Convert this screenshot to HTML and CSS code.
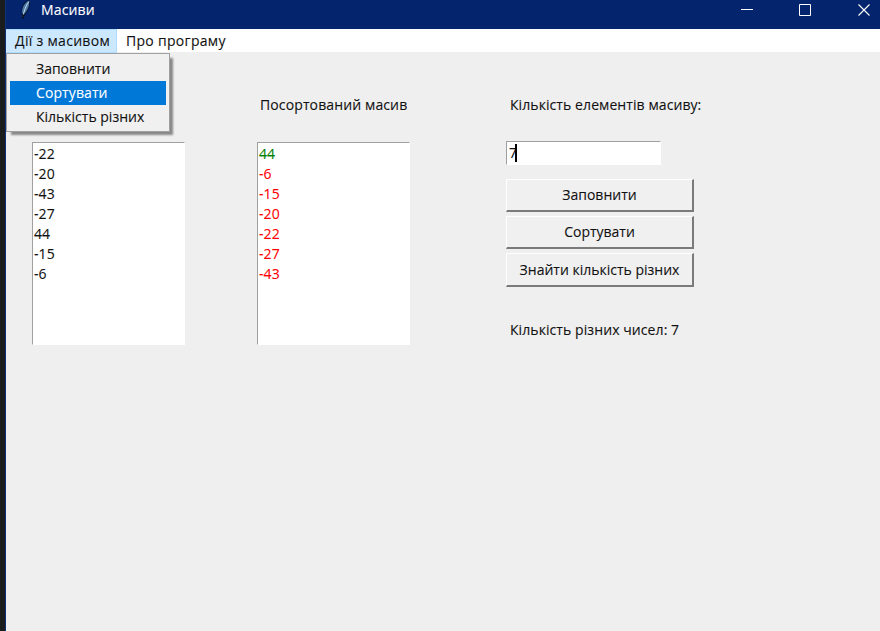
FILE: index.html
```html
<!DOCTYPE html>
<html lang="uk">
<head>
<meta charset="utf-8">
<title>Масиви</title>
<link rel="stylesheet" href="styles.css">
</head>
<body>
<div class="window">
  <header class="titlebar">
    <svg class="feather" width="12" height="20" viewBox="0 0 12 20">
      <path d="M3 18.500C1 14 1 7 4 3.500 6 1 8.500 0 9.500 1c1.200 2-.2 8-2.600 11.500C5.500 14.500 4 15.500 3 18.500z" fill="#07142c"/>
      <path d="M2.200 13.500C1.700 8.500 3.500 3.500 8.800 .8 9.800 5 8 10 4.500 13.500z" fill="#527da9"/>
      <path d="M3 17C3.800 11.500 5.500 6 9 1.500" fill="none" stroke="#b6d9ec" stroke-width="1"/>
      <path d="M2.600 18.500l.9-4" stroke="#080d18" stroke-width="1.500"/>
    </svg>
    <h1 class="title">Масиви</h1>
    <svg class="controls" width="134" height="20" viewBox="0 0 134 20" fill="none" stroke="#fff">
      <path d="M1 9.500h12M59.500 4.500h11v11h-11z"/>
      <path d="M118.500 4.500l11 11M129.500 4.500l-11 11" stroke-width="1.100"/>
    </svg>
  </header>
  <nav class="menubar">
    <div class="menu-item open"><span>Дії з масивом</span>
      <div class="dropdown">
        <div class="option">Заповнити</div>
        <div class="option selected">Сортувати</div>
        <div class="option">Кількість різних</div>
      </div>
    </div>
    <div class="menu-item about">Про програму</div>
  </nav>
  <main class="content">
    <section class="array">
      <div class="label"></div>
      <div class="list"><div>-22</div><div>-20</div><div>-43</div><div>-27</div><div>44</div><div>-15</div><div>-6</div></div>
    </section>
    <section class="array">
      <div class="label sorted-label">Посортований масив</div>
      <div class="list sorted"><div class="max">44</div><div>-6</div><div>-15</div><div>-20</div><div>-22</div><div>-27</div><div>-43</div></div>
    </section>
    <section class="panel">
      <div class="label amount-label">Кількість елементів масиву:</div>
      <div class="entry">7<span class="caret"></span></div>
      <div class="buttons">
        <button>Заповнити</button>
        <button>Сортувати</button>
        <button class="find">Знайти кількість різних</button>
      </div>
      <div class="result">Кількість різних чисел: 7</div>
    </section>
  </main>
</div>
</body>
</html>
```
FILE: styles.css
```css
* { box-sizing: border-box; }
body {
  margin: 0;
  height: 631px;
  padding-left: 5px;
  overflow: hidden;
  background: #1b1c1e;
  color: #111;
  font: 14px/20px "Open Sans", "Noto Sans", sans-serif;
  -webkit-text-stroke: 0.1px currentColor;
  white-space: nowrap;
}
.window { height: 631px; border-left: 1px solid #11307a; background: #efefef; }
.titlebar { display: flex; align-items: flex-start; height: 29px; padding-left: 14px; background: #04246e; color: #fff; }
.title { margin: 0 0 0 9px; font: 14px/20px "Open Sans", sans-serif; letter-spacing: 0.15px; }
.controls { margin-left: auto; margin-right: 6px; }
.menubar { display: flex; height: 23px; background: #fff; line-height: 24px; }
.menu-item { position: relative; padding-left: 9px; letter-spacing: 0.3px; }
.open { width: 111px; height: 24px; border: 1px solid #b0dcff; border-left: 0; background: #cce8ff; line-height: 22px; }
.dropdown {
  position: absolute;
  top: 23px;
  left: 0;
  z-index: 1;
  width: 164px;
  height: 79px;
  padding: 3px;
  border: 1px solid #a0a0a0;
  background: #f0f0f0;
  box-shadow: 4px 4px 2px -1px #888;
  letter-spacing: 0;
}
.option { height: 24px; padding-left: 26px; line-height: 24px; }
.selected { background: #0078d7; color: #fff; letter-spacing: 0.1px; }
.content { display: grid; grid-template-columns: 225px 249px 200px; padding: 43px 0 0 26px; }
.label { height: 47px; padding-left: 3px; }
.sorted-label { letter-spacing: 0.12px; }
.list { width: 153px; height: 203px; border: 1px solid #a0a0a0; border-right-color: #fff; border-bottom-color: #fff; background: #fff; padding: 1px 0 0 1px; letter-spacing: 0.1px; }
.sorted { color: #f00; }
.max { color: #008000; }
.amount-label, .result { padding-left: 4px; letter-spacing: 0.08px; }
.entry { display: flex; align-items: center; width: 155px; height: 24px; margin-top: -1px; padding-left: 2px; border: 1px solid #a0a0a0; border-right-color: #fff; border-bottom-color: #fff; background: #fff; }
.caret { width: 2px; height: 18px; margin-left: -2px; background: #000; }
.buttons { display: grid; gap: 4px; margin-top: 14px; }
button { width: 188px; height: 33px; padding: 0; border: 1px solid #fff; border-right: 2px solid #7a7a7a; border-bottom: 2px solid #7a7a7a; background: #f0f0f0; color: #111; font: inherit; -webkit-text-stroke: inherit; }
.find { height: 34px; }
.result { margin-top: 33px; }
```
